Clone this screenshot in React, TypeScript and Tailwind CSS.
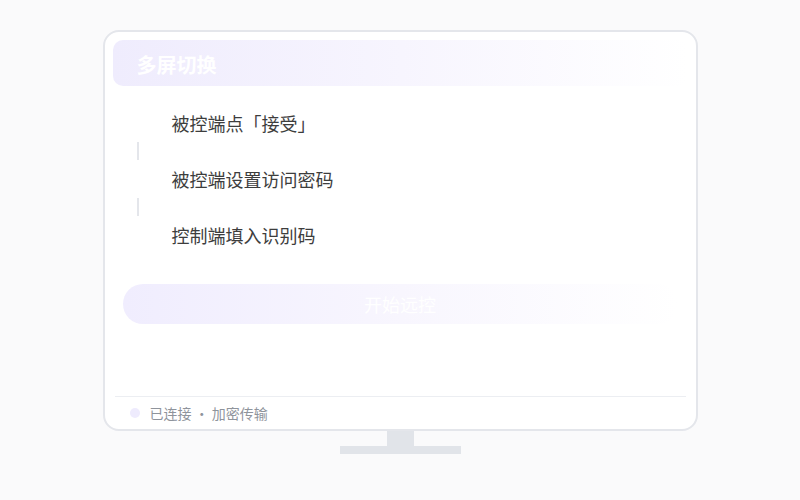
const steps = ["被控端点「接受」", "被控端设置访问密码", "控制端填入识别码"];

export default function App() {
  return (
    <div
      className="w-[800px] h-[500px] bg-[#fafafb] flex flex-col items-center pt-[30px]"
      style={{ fontFamily: '"Noto Sans CJK SC", "Noto Sans", sans-serif' }}
    >
      {/* screen */}
      <div className="w-[595px] h-[401px] bg-white border-2 border-[#e4e6eb] rounded-[16px] flex flex-col px-[8px] pt-[8px]">
        <div className="h-[46px] rounded-[10px] bg-gradient-to-r from-[#efecfd] via-[#f7f5fe] to-white flex items-center px-[24px] pt-[4px]">
          <span className="text-[20px] font-bold text-white leading-none">多屏切换</span>
        </div>

        <div className="flex flex-col mt-[18px]">
          {steps.map((s, i) => (
            <div key={s} className="flex flex-col">
              {i > 0 && (
                <div className="h-[18px] pl-[24px] flex">
                  <div className="w-[2px] h-full bg-[#e4e6eb]" />
                </div>
              )}
              <div className="h-[38px] flex items-center pl-[59px]">
                <span className="text-[18px] text-[#3d3d3d] leading-none">{s}</span>
              </div>
            </div>
          ))}
        </div>

        <div className="mt-[30px] mx-[10px] h-[40px] rounded-full bg-gradient-to-r from-[#f0edfe] via-[#f8f6fe] to-white flex items-center justify-center">
          <span className="text-[18px] text-white leading-none">开始远控</span>
        </div>

        <div className="mt-auto mx-[2px] border-t border-[#eceef2] h-[33px] flex items-center pl-[15px] gap-[10px]">
          <div className="w-[10px] h-[10px] rounded-full bg-[#eeebfd]" />
          <span className="text-[14px] text-[#8f949c] leading-none">已连接 · 加密传输</span>
        </div>
      </div>

      {/* stand */}
      <div className="w-[27px] h-[15px] bg-[#e1e4e9]" />
      <div className="w-[121px] h-[8px] bg-[#e1e4e9]" />
    </div>
  );
}
